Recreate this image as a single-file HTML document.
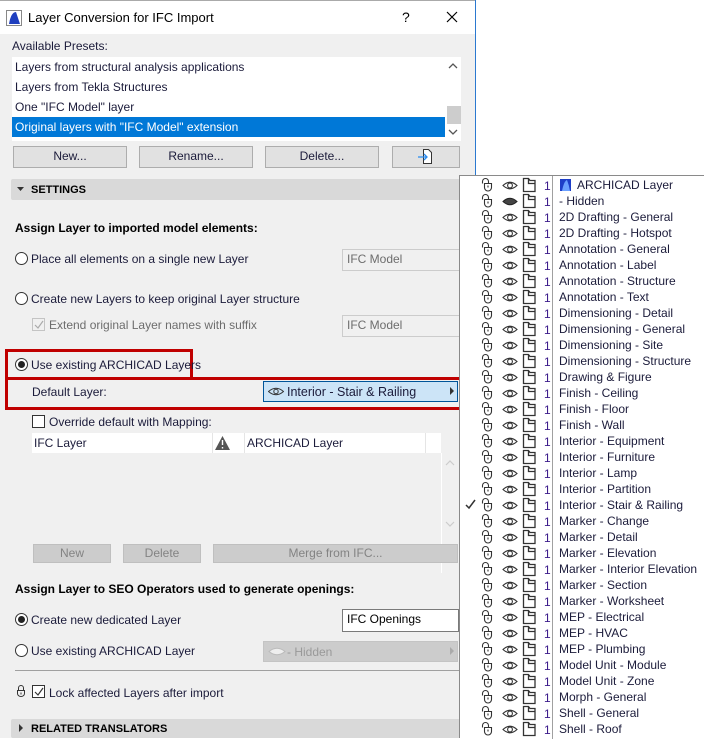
<!DOCTYPE html>
<html><head><meta charset="utf-8">
<style>
*{box-sizing:border-box;margin:0;padding:0}
body{width:704px;height:738px;overflow:hidden;background:#fff;font-family:"Liberation Sans",sans-serif;font-size:12px;color:#1b1b3a;position:relative}
.a{position:absolute}
.t{position:absolute;white-space:nowrap;line-height:14px}
.b{font-weight:bold;color:#000}
.btn{position:absolute;background:#e1e1e1;border:1px solid #adadad;text-align:center;line-height:18px}
.dbtn{position:absolute;background:#cccccc;border:1px solid #bfbfbf;text-align:center;line-height:17px;color:#838383}
.radio{position:absolute;width:13px;height:13px;border:1px solid #333;border-radius:50%;background:#fff}
.radio.on::after{content:"";position:absolute;left:2px;top:2px;width:7px;height:7px;border-radius:50%;background:#222}
.cb{position:absolute;width:13px;height:13px;border:1px solid #333;background:#fff}
.inp{position:absolute;border:1px solid #ccc;background:#f0f0f0;color:#6d6d6d;padding-left:4px;line-height:19px}
.row{position:relative;width:245px;height:16px}
.row svg{position:absolute;left:0;top:0}
.row span{position:absolute;left:99px;top:1px;line-height:14px;white-space:nowrap}
</style></head><body>
<svg width="0" height="0" style="position:absolute">
<defs>
<g id="lk" fill="none" stroke="#333" stroke-width="1.1"><path d="M22.5 6.5 V4.5 a3 3 0 0 1 6 0 V6"/><path d="M24.5 6.5 h7 v4 a3.5 3.5 0 0 1 -7 0 z"/><path d="M28 8.5 v2"/></g>
<g id="ey" fill="none" stroke="#333" stroke-width="1.1"><path d="M43 8.5 Q50 2 57 8.5 Q50 15 43 8.5 z"/><circle cx="50" cy="8.5" r="2.4"/></g>
<g id="dc" fill="none" stroke="#333" stroke-width="1.3"><path d="M63.5 1.5 h5 l1.5 2 h5 v11 h-11.5 z"/><path d="M68.5 1.5 v5 h6.5"/></g>
<g id="ic"><use href="#lk"/><use href="#ey"/><use href="#dc"/><text x="84" y="13" fill="#3a1a8a" font-family="Liberation Sans" font-size="12">1</text></g>
</defs></svg>

<!-- dialog -->
<div class="a" style="left:0;top:0;width:476px;height:738px;background:#f0f0f0"></div>
<div class="a" style="left:0;top:0;width:476px;height:34px;background:#fff"></div>
<div class="a" style="left:0;top:0;width:476px;height:1px;background:#aaa"></div>
<div class="a" style="left:475px;top:0;width:1px;height:176px;background:#2b79d0"></div>
<svg class="a" style="left:6px;top:10px" width="16" height="16"><rect x="0.5" y="0.5" width="15" height="15" fill="#fff" stroke="#888"/><path d="M3 14 Q5 2 10 2 Q12 8 14 14 z" fill="#1f3fbf"/></svg>
<div class="t" style="left:28px;top:11px;font-size:13px;color:#000">Layer Conversion for IFC Import</div>
<div class="t" style="left:402px;top:10px;font-size:14px;color:#000">?</div>
<svg class="a" style="left:446px;top:11px" width="12" height="12"><path d="M1 1 L11 11 M11 1 L1 11" stroke="#000" stroke-width="1.2"/></svg>

<div class="t" style="left:12px;top:39px">Available Presets:</div>
<div class="a" style="left:12px;top:57px;width:449px;height:84px;background:#fff"></div>
<div class="t" style="left:15px;top:60px">Layers from structural analysis applications</div>
<div class="t" style="left:15px;top:80px">Layers from Tekla Structures</div>
<div class="t" style="left:15px;top:100px">One "IFC Model" layer</div>
<div class="a" style="left:12px;top:117px;width:433px;height:20px;background:#0078d7"></div>
<div class="t" style="left:15px;top:120px;color:#fff">Original layers with "IFC Model" extension</div>
<svg class="a" style="left:448px;top:62px" width="10" height="8"><path d="M1 6 L5 2 L9 6" fill="none" stroke="#555" stroke-width="1.3"/></svg>
<div class="a" style="left:447px;top:106px;width:14px;height:18px;background:#cdcdcd"></div>
<svg class="a" style="left:448px;top:128px" width="10" height="8"><path d="M1 2 L5 6 L9 2" fill="none" stroke="#555" stroke-width="1.3"/></svg>

<div class="btn" style="left:13px;top:146px;width:114px;height:22px">New...</div>
<div class="btn" style="left:139px;top:146px;width:114px;height:22px">Rename...</div>
<div class="btn" style="left:265px;top:146px;width:114px;height:22px">Delete...</div>
<div class="btn" style="left:392px;top:146px;width:68px;height:22px"></div>
<svg class="a" style="left:418px;top:148px" width="16" height="18"><path d="M5.5 1.5 h5 l3 3 v11 h-8 z" fill="#fff" stroke="#333"/><path d="M0 9 h9 M6 6 l3 3 l-3 3" fill="none" stroke="#2b8cf0" stroke-width="1.3"/></svg>

<div class="a" style="left:11px;top:179px;width:449px;height:21px;background:#d9d9d9;border-radius:2px"></div>
<svg class="a" style="left:17px;top:187px" width="8" height="6"><path d="M0 0 H7 L3.5 4 z" fill="#333"/></svg>
<div class="t b" style="left:31px;top:183px;font-size:11px">SETTINGS</div>

<div class="t b" style="left:15px;top:221px">Assign Layer to imported model elements:</div>
<div class="radio" style="left:15px;top:252px"></div>
<div class="t" style="left:31px;top:252px">Place all elements on a single new Layer</div>
<div class="inp" style="left:342px;top:249px;width:118px;height:22px">IFC Model</div>
<div class="radio" style="left:15px;top:292px"></div>
<div class="t" style="left:31px;top:292px">Create new Layers to keep original Layer structure</div>
<div class="cb" style="left:32px;top:318px;border-color:#c4c4c4;background:#f0f0f0"></div>
<svg class="a" style="left:34px;top:320px" width="10" height="10"><path d="M1 5 L4 8 L9 1" fill="none" stroke="#aaa" stroke-width="1.2"/></svg>
<div class="t" style="left:49px;top:318px;color:#6d6d6d">Extend original Layer names with suffix</div>
<div class="inp" style="left:342px;top:315px;width:118px;height:22px">IFC Model</div>

<div class="a" style="left:5px;top:349px;width:188px;height:31px;border:3px solid #c00000"></div>
<div class="radio on" style="left:15px;top:358px"></div>
<div class="t" style="left:31px;top:358px">Use existing ARCHICAD Layers</div>
<div class="a" style="left:5px;top:377px;width:459px;height:33px;border:3px solid #c00000"></div>
<div class="t" style="left:32px;top:385px">Default Layer:</div>
<div class="a" style="left:263px;top:381px;width:195px;height:21px;background:#cce4f7;border:1px solid #005499"></div>
<svg class="a" style="left:268px;top:386px" width="16" height="11"><path d="M0.5 5.5 Q8 -1 15.5 5.5 Q8 12 0.5 5.5 z" fill="none" stroke="#333"/><circle cx="8" cy="5.5" r="2.2" fill="none" stroke="#333"/></svg>
<div class="t" style="left:287px;top:385px;font-size:12.5px">Interior - Stair &amp; Railing</div>
<svg class="a" style="left:450px;top:387px" width="5" height="8"><path d="M0 0 L4 4 L0 8 z" fill="#333"/></svg>

<div class="cb" style="left:32px;top:415px"></div>
<div class="t" style="left:49px;top:415px">Override default with Mapping:</div>
<div class="a" style="left:32px;top:433px;width:409px;height:20px;background:#fff"></div>
<div class="a" style="left:212px;top:433px;width:1px;height:20px;background:#e5e5e5"></div>
<div class="a" style="left:244px;top:433px;width:1px;height:20px;background:#e5e5e5"></div>
<div class="a" style="left:425px;top:433px;width:1px;height:20px;background:#e5e5e5"></div>
<div class="t" style="left:34px;top:436px">IFC Layer</div>
<svg class="a" style="left:214px;top:435px" width="18" height="16"><path d="M8.5 1 L16 15 H1 z" fill="#555"/><path d="M8.5 5 v5 M8.5 12 v1.5" stroke="#fff" stroke-width="1.4"/></svg>
<div class="t" style="left:247px;top:436px">ARCHICAD Layer</div>
<div class="a" style="left:441px;top:453px;width:1px;height:120px;background:#fff"></div>
<svg class="a" style="left:445px;top:459px" width="10" height="7"><path d="M1 6 L5 2 L9 6" fill="none" stroke="#ccc" stroke-width="1.2"/></svg>
<svg class="a" style="left:445px;top:521px" width="10" height="7"><path d="M1 1 L5 5 L9 1" fill="none" stroke="#ccc" stroke-width="1.2"/></svg>

<div class="dbtn" style="left:33px;top:544px;width:78px;height:19px">New</div>
<div class="dbtn" style="left:123px;top:544px;width:78px;height:19px">Delete</div>
<div class="dbtn" style="left:213px;top:544px;width:245px;height:19px">Merge from IFC...</div>

<div class="t b" style="left:15px;top:582px">Assign Layer to SEO Operators used to generate openings:</div>
<div class="radio on" style="left:15px;top:613px"></div>
<div class="t" style="left:31px;top:613px">Create new dedicated Layer</div>
<div class="inp" style="left:342px;top:609px;width:117px;height:23px;background:#fff;border-color:#7a7a7a;color:#000">IFC Openings</div>
<div class="radio" style="left:15px;top:644px"></div>
<div class="t" style="left:31px;top:644px">Use existing ARCHICAD Layer</div>
<div class="a" style="left:263px;top:641px;width:195px;height:21px;background:#cccccc;border:1px solid #c4c4c4"></div>
<svg class="a" style="left:268px;top:646px" width="18" height="11"><path d="M1 5.5 Q9 -1 17 5.5 Q9 12 1 5.5 z" fill="#eee" stroke="#bbb"/></svg>
<div class="t" style="left:287px;top:645px;color:#999">- Hidden</div>
<svg class="a" style="left:450px;top:647px" width="5" height="8"><path d="M0 0 L4 4 L0 8 z" fill="#aaa"/></svg>
<div class="a" style="left:15px;top:670px;width:444px;height:1px;background:#a0a0a0"></div>

<svg class="a" style="left:15px;top:684px" width="12" height="14"><path d="M3.5 6 V4 a2.5 2.5 0 0 1 5 0 V6" fill="none" stroke="#333"/><path d="M2.5 6.5 h7 v3 a3.5 3 0 0 1 -7 0 z" fill="none" stroke="#333"/><path d="M6 8.5 v2" stroke="#333"/></svg>
<div class="cb" style="left:32px;top:685px"></div>
<svg class="a" style="left:34px;top:687px" width="10" height="10"><path d="M1 5 L4 8 L9 1" fill="none" stroke="#333" stroke-width="1.2"/></svg>
<div class="t" style="left:49px;top:686px">Lock affected Layers after import</div>

<div class="a" style="left:11px;top:719px;width:449px;height:19px;background:#d9d9d9;border-radius:2px"></div>
<svg class="a" style="left:19px;top:724px" width="6" height="8"><path d="M0 0 L4 4 L0 8 z" fill="#333"/></svg>
<div class="t b" style="left:31px;top:722px;font-size:11px">RELATED TRANSLATORS</div>

<!-- popup -->
<div class="a" style="left:459px;top:175px;width:245px;height:563px;background:#fff;border-left:1px solid #8a8a8a;border-top:1px solid #8a8a8a">
<div class="a" style="left:92px;top:0;width:1px;height:563px;background:#a0a0a0"></div>
<div class="a" style="top:1px;left:0;width:245px">
<div class="row"><svg width="99" height="16"><use href="#ic"/></svg><svg style="left:99px" width="14" height="16"><rect x="1" y="2" width="11" height="12" fill="#1d3ec8"/><path d="M3 14 Q5 4 8 3 Q10 8 11 14" fill="#6aa0ff"/></svg><span style="left:117px">ARCHICAD Layer</span></div>
<div class="row"><svg width="99" height="16"><use href="#lk"/><path d="M43 8.5 Q50 2 57 8.5 Q50 15 43 8.5 z" fill="#444" stroke="#222"/><use href="#dc"/><text x="84" y="13" fill="#3a1a8a" font-family="Liberation Sans" font-size="12">1</text></svg><span>- Hidden</span></div>
<div class="row"><svg width="99" height="16"><use href="#ic"/></svg><span>2D Drafting - General</span></div>
<div class="row"><svg width="99" height="16"><use href="#ic"/></svg><span>2D Drafting - Hotspot</span></div>
<div class="row"><svg width="99" height="16"><use href="#ic"/></svg><span>Annotation - General</span></div>
<div class="row"><svg width="99" height="16"><use href="#ic"/></svg><span>Annotation - Label</span></div>
<div class="row"><svg width="99" height="16"><use href="#ic"/></svg><span>Annotation - Structure</span></div>
<div class="row"><svg width="99" height="16"><use href="#ic"/></svg><span>Annotation - Text</span></div>
<div class="row"><svg width="99" height="16"><use href="#ic"/></svg><span>Dimensioning - Detail</span></div>
<div class="row"><svg width="99" height="16"><use href="#ic"/></svg><span>Dimensioning - General</span></div>
<div class="row"><svg width="99" height="16"><use href="#ic"/></svg><span>Dimensioning - Site</span></div>
<div class="row"><svg width="99" height="16"><use href="#ic"/></svg><span>Dimensioning - Structure</span></div>
<div class="row"><svg width="99" height="16"><use href="#ic"/></svg><span>Drawing &amp; Figure</span></div>
<div class="row"><svg width="99" height="16"><use href="#ic"/></svg><span>Finish - Ceiling</span></div>
<div class="row"><svg width="99" height="16"><use href="#ic"/></svg><span>Finish - Floor</span></div>
<div class="row"><svg width="99" height="16"><use href="#ic"/></svg><span>Finish - Wall</span></div>
<div class="row"><svg width="99" height="16"><use href="#ic"/></svg><span>Interior - Equipment</span></div>
<div class="row"><svg width="99" height="16"><use href="#ic"/></svg><span>Interior - Furniture</span></div>
<div class="row"><svg width="99" height="16"><use href="#ic"/></svg><span>Interior - Lamp</span></div>
<div class="row"><svg width="99" height="16"><use href="#ic"/></svg><span>Interior - Partition</span></div>
<div class="row"><svg width="99" height="16"><path d="M6 8 L9 11 L15 3" fill="none" stroke="#333" stroke-width="1.5"/><use href="#ic"/></svg><span>Interior - Stair &amp; Railing</span></div>
<div class="row"><svg width="99" height="16"><use href="#ic"/></svg><span>Marker - Change</span></div>
<div class="row"><svg width="99" height="16"><use href="#ic"/></svg><span>Marker - Detail</span></div>
<div class="row"><svg width="99" height="16"><use href="#ic"/></svg><span>Marker - Elevation</span></div>
<div class="row"><svg width="99" height="16"><use href="#ic"/></svg><span>Marker - Interior Elevation</span></div>
<div class="row"><svg width="99" height="16"><use href="#ic"/></svg><span>Marker - Section</span></div>
<div class="row"><svg width="99" height="16"><use href="#ic"/></svg><span>Marker - Worksheet</span></div>
<div class="row"><svg width="99" height="16"><use href="#ic"/></svg><span>MEP - Electrical</span></div>
<div class="row"><svg width="99" height="16"><use href="#ic"/></svg><span>MEP - HVAC</span></div>
<div class="row"><svg width="99" height="16"><use href="#ic"/></svg><span>MEP - Plumbing</span></div>
<div class="row"><svg width="99" height="16"><use href="#ic"/></svg><span>Model Unit - Module</span></div>
<div class="row"><svg width="99" height="16"><use href="#ic"/></svg><span>Model Unit - Zone</span></div>
<div class="row"><svg width="99" height="16"><use href="#ic"/></svg><span>Morph - General</span></div>
<div class="row"><svg width="99" height="16"><use href="#ic"/></svg><span>Shell - General</span></div>
<div class="row"><svg width="99" height="16"><use href="#ic"/></svg><span>Shell - Roof</span></div>
</div>
</div>
</body></html>
